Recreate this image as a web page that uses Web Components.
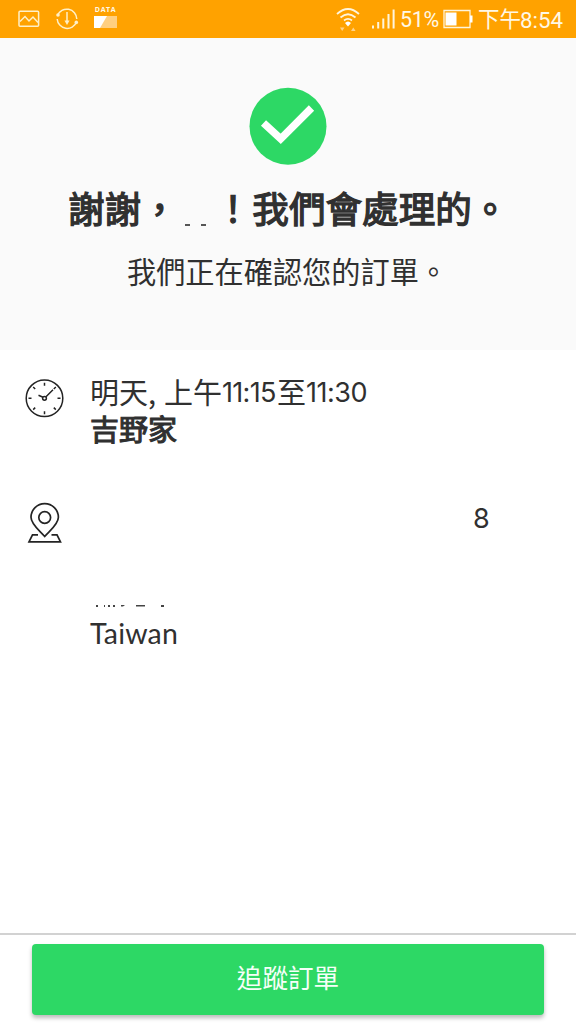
<!DOCTYPE html>
<html lang="zh-Hant"><head><meta charset="utf-8"><title>訂單確認</title>
<style>html,body{margin:0;height:100%;background:#fff}body{overflow:hidden;font-family:"Noto Sans CJK TC",sans-serif;color:#303030}</style></head>
<body><order-page></order-page>
<script>
const define=(name,html)=>customElements.define(name,class extends HTMLElement{
  constructor(){super();const t=document.createElement('template');t.innerHTML=html;this.attachShadow({mode:'open'}).append(t.content.cloneNode(true));}
});
define('status-bar',`<style>
:host{display:flex;height:38px;background:#ffa200;color:#fff8e6;box-sizing:border-box;padding:0 13px 0 18px;align-items:center;font:22px/38px Roboto,"Noto Sans CJK TC",sans-serif;white-space:nowrap}
svg{display:block;flex:none}.data{display:flex;flex-direction:column;align-items:center;margin:-5px 0 0 14px;width:24px}
.data b{font:bold 7px/8px "Open Sans",sans-serif;letter-spacing:.6px;margin:0 -1px 2px 0}
.sp{flex:1}.pct{width:41px;margin-left:4px;font-size:21.5px;letter-spacing:-.3px;padding-top:2px}.time{margin-left:5px;width:85px;padding-top:2px;display:flex;align-items:center;font-size:22.300px}.time i{font-style:normal;font-size:21.5px;width:42px;font-weight:400}
</style>
<svg width="22" height="20" viewBox="0 0 22 20" fill="none" stroke="#fff0c8" stroke-width="1.5"><rect x="1" y="2.200" width="19.6" height="15" rx="1"/><path d="M2 12.500l5-5 4 4.500 4-4 5 5.500"/></svg>
<svg style="margin-left:15px" width="24" height="24" viewBox="0 0 24 24" fill="none" stroke="#fff0c8" stroke-width="1.5"><path d="M2.5 8.5A10 10 0 0 1 21.8 12M21.5 15A10 10 0 0 1 2.2 12M12 5v11"/><g fill="#fff0c8" stroke="none"><circle cx="3" cy="8" r="1.8"/><circle cx="21.3" cy="15.4" r="1.8"/><path d="M9.5 13.5h5L12 18z"/></g></svg>
<div class="data"><b>DATA</b><svg width="23" height="12"><path d="M0 0h23v12H0z" fill="#ffcf80"/><path d="M0 0h13L6 12H0z" fill="#fff"/></svg></div>
<div class="sp"></div>
<svg width="24" height="26" viewBox="0 0 24 26" fill="none" stroke="#fff5dc" stroke-width="1.8"><path d="M1 8Q12-2 23 8M4.5 11.500q7.5-6.5 15 0M8 14.5q4-3.2 8 0"/><path d="M9 17q3-3 6 0l-3 3.5z" fill="#fff" stroke="none"/><path d="M4 21.500h4.500L6.200 25zM15 25l2.300-3.500 2.300 3.500z" fill="#ffd28a" stroke="none"/></svg>
<svg style="margin-left:12px" width="24" height="22" fill="#fff5dc"><path d="M0 17.5h2v3H0zM5.200 14h2v6.500h-2zM10.300 10.500h2v10h-2zM15.500 6h2v14.500h-2zM20.600 1.500h2v19h-2z"/></svg>
<span class="pct">51%</span>
<svg style="margin-left:2px" width="30" height="20" viewBox="0 0 30 20"><path d="M1 1.500h26v17H1z" fill="none" stroke="#fff5dc" stroke-width="1.300"/><path d="M2.500 3.500h11v13h-11zM27 6.500h2.500v7H27z" fill="#fff"/></svg>
<span class="time"><i>下午</i>8:54</span>`);
define('confirmation-hero',`<style>
:host{display:flex;flex-direction:column;align-items:center;height:312px;background:#fafafa}
.ok{display:block;margin-top:49px}.title{display:flex;align-items:center;height:54px;margin:16px 0 0 13px;width:453px;font-size:36.600px;line-height:54px;font-weight:400;-webkit-text-stroke:1.300px #303030;white-space:nowrap}
.gap{display:flex;gap:11px;width:36px;margin:34px 0 0 7px}.gap i{width:5px;height:2px;background:#555}.bang{margin-left:-6px;margin-right:1px}.sub{font-size:29.2px;line-height:42px;font-weight:400;white-space:nowrap;margin-top:14px;width:322px}
</style><svg class="ok" width="78" height="78" viewBox="0 0 78 78"><circle cx="39" cy="39.300" r="38.500" fill="#2dd865"/><path d="M14.500 37L31.700 52.800 62.500 22" transform="translate(0 -1)" fill="none" stroke="#fff" stroke-width="7.500"/></svg>
<div class="title"><span>謝謝，</span><span class="gap"><i></i><i></i></span><span class="bang">！</span><span>我們會處理的。</span></div><div class="sub">我們正在確認您的訂單。</div>`);
define('detail-row',`<style>:host{display:flex;align-items:flex-start;padding-left:24px}.icon{width:42px;flex:none}.body{margin-left:24px;flex:1}</style><div class="icon"><slot name="icon"></slot></div><div class="body"><slot></slot></div>`);
define('clock-icon',`<style>:host,svg{display:block}</style><svg width="42" height="42" viewBox="0 0 42 42" fill="none" stroke="#242424" stroke-width="1.500"><circle cx="20.500" cy="21.300" r="18.300"/><g transform="translate(0 .8)"><path d="M20.500 5v3M20.500 33.500v3M4.500 20.500h3M33.500 20.500h3M9.200 9.200l2 2M31.800 9.200l-2 2M9.200 31.800l2-2M31.800 31.800l-2-2M14.500 17.500l4.500 2M22 19l7-7"/><circle cx="20.500" cy="20.500" r="1.900"/></g></svg>`);
define('pin-icon',`<style>:host,svg{display:block}</style><svg width="42" height="42" viewBox="0 0 42 42" fill="none" stroke="#242424" stroke-width="1.700"><path d="M20.700 34.500C16 29 7 22.500 7 15.300a13.700 13.700 0 0 1 27.400 0c0 7.200-9 13.700-13.700 19.200z"/><circle cx="20.700" cy="15.500" r="5.900"/><path d="M14 32.800H8.500L5 39.900h31.500L33 32.800h-5.500"/></svg>`);
define('order-details',`<style>
:host{display:flex;flex-direction:column;flex:1;font-size:29px;line-height:36px;font-weight:400}
detail-row.when{padding-top:27px;height:127px;box-sizing:border-box}.line{display:flex;white-space:nowrap;margin-top:-4px}.line span{flex:none}
.n{font-family:Inter,sans-serif;font-size:27px;font-weight:400;padding-top:2px}.a{width:55px;letter-spacing:-.700px}.b{width:62px;letter-spacing:-.500px}
.comma{width:16px}.cn{font-weight:400;-webkit-text-stroke:1.100px #303030;margin-top:-1px}
.where{padding-top:25px}.address{display:flex;flex-direction:column;height:146px}.eight{font:400 27px/36px Inter,sans-serif;margin:-1px 0 0 383px}
.trace{display:block;flex:none;margin:68px 0 0 4px}.tw{font:28.500px/36px Lato,sans-serif;letter-spacing:.2px;margin-top:7px}
</style>
<detail-row class="when"><clock-icon slot="icon"></clock-icon><div class="line"><span>明天</span><span class="comma">,</span><span>上午</span><span class="n a">11:15</span><span>至</span><span class="n b">11:30</span></div><div class="cn">吉野家</div></detail-row>
<detail-row class="where"><pin-icon slot="icon"></pin-icon><div class="address"><div class="eight">8</div><svg class="trace" width="76" height="3" fill="#444"><path d="M2 0h2v2H2zM10 0h1v2h-1zM14 0h2v2h-2zM19 0h2v2h-2zM27 0h4l-2 1.500h-2zM42 0h9v1.500h-9zM67 0h3v2h-3z"/></svg><div class="tw">Taiwan</div></div></detail-row>`);
define('action-footer',`<style>:host{display:block;height:91px;box-sizing:border-box;border-top:2px solid #d2d2d2;padding:9px 32px 0;background:#fff}
button{display:block;width:100%;height:71px;border:0;border-radius:4px;background:#2dd865;box-shadow:0 3px 4px #0004;color:#f5fff8;font:400 25.600px/66px "Noto Sans CJK TC",sans-serif;padding:0 0 5px}</style><button><slot></slot></button>`);
define('order-page',`<style>:host{display:flex;flex-direction:column;height:1024px;width:576px;background:#fff}</style><status-bar></status-bar><confirmation-hero></confirmation-hero><order-details></order-details><action-footer>追蹤訂單</action-footer>`);
</script></body></html>
